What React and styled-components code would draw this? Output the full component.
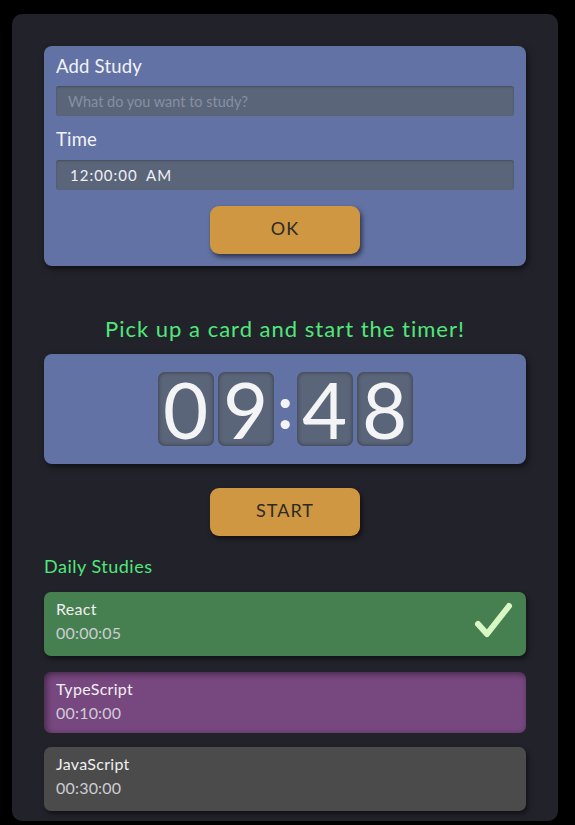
import React from 'react';
import styled, { createGlobalStyle } from 'styled-components';

const GlobalStyle = createGlobalStyle`
  body {
    margin: 0;
    background: #000;
    font-family: 'Lato', 'Noto Sans', sans-serif;
  }
`;

const Page = styled.div`
  padding: 14px 17px 0 12px;
`;

const Container = styled.main`
  background: #22222b;
  border-radius: 10px;
  padding: 32px 32px 10px;
  display: flex;
  flex-direction: column;
`;

const Card = styled.section`
  background: #6272a4;
  border-radius: 8px;
  box-shadow: 2px 3px 6px rgba(0, 0, 0, 0.55);
  padding: ${props => props.$padding || '8px 12px 12px'};
  display: flex;
  flex-direction: column;
`;

const Label = styled.label`
  color: #f2f2f8;
  font-size: 18.5px;
  line-height: 24px;
  letter-spacing: 0.2px;
  margin: ${props => props.$margin || '0'};
`;

const Input = styled.input`
  height: 30px;
  box-sizing: border-box;
  border: none;
  border-radius: 3px;
  background: #5b6579;
  box-shadow: inset 0 1px 2px rgba(0, 0, 0, 0.25);
  color: #eef0f6;
  font-family: inherit;
  font-size: 14.5px;
  padding: 0 12px;
  margin-top: 8px;
  outline: none;

  &::placeholder {
    color: #8690a3;
  }
`;

const TimeField = styled.div`
  height: 30px;
  box-sizing: border-box;
  border-radius: 3px;
  background: #5b6579;
  box-shadow: inset 0 1px 2px rgba(0, 0, 0, 0.25);
  color: #eef0f6;
  font-size: 15px;
  padding: 0 14px;
  margin-top: 9px;
  display: flex;
  align-items: center;
  letter-spacing: 1px;
  word-spacing: 4px;
`;

const Button = styled.button`
  align-self: center;
  width: 150px;
  height: 48px;
  border: none;
  border-radius: 9px;
  background: #cf9741;
  color: #2c2a28;
  font-family: inherit;
  font-size: 18px;
  letter-spacing: 1px;
  padding: 0 0 5px;
  box-shadow: 2px 3px 5px rgba(0, 0, 0, 0.55);
  cursor: pointer;
  margin-top: ${props => props.$top || '0'};
`;

const Heading = styled.h2`
  margin: ${props => props.$margin};
  color: #50e87a;
  font-weight: 400;
  font-size: ${props => props.$size};
  letter-spacing: ${props => props.$spacing || '0'};
  text-align: ${props => props.$align || 'left'};
  line-height: 1.2;
`;

const Clock = styled.div`
  display: flex;
  justify-content: center;
  align-items: center;
  gap: 4px;
`;

const Digit = styled.span`
  width: 56px;
  height: 74px;
  border-radius: 7px;
  background: #5b6579;
  box-shadow: inset 0 0 4px rgba(0, 0, 0, 0.45);
  color: #f4f4f6;
  font-size: 78px;
  line-height: 74px;
  text-align: center;
`;

const Colon = styled.span`
  width: 15px;
  color: #f4f4f6;
  font-size: 60px;
  line-height: 74px;
  text-align: center;
  margin: -6px 0 0;
  font-weight: 700;
`;

const StudyList = styled.ul`
  list-style: none;
  margin: 0;
  padding: 0;
  display: flex;
  flex-direction: column;
  gap: 14px;
`;

const colors = {
  done: '#468050',
  active: '#77477f',
  idle: '#4b4b4b',
};

const StudyCard = styled.li`
  position: relative;
  height: ${props => (props.$status === 'active' ? '61px' : '64px')};
  margin-top: ${props => (props.$status === 'active' ? '2px' : '0')};
  box-sizing: border-box;
  border-radius: 7px;
  padding: 7px 12px;
  background: ${props => colors[props.$status]};
  box-shadow: ${props =>
    props.$status === 'active'
      ? 'inset 2px 2px 6px rgba(0, 0, 0, 0.45)'
      : '2px 3px 5px rgba(0, 0, 0, 0.5)'};
  display: flex;
  flex-direction: column;
  gap: 4px;
`;

const StudyName = styled.span`
  color: #f0f0f0;
  font-size: 16px;
  letter-spacing: 0.3px;
  line-height: 20px;
`;

const StudyTime = styled.span`
  color: #cdcdd3;
  font-size: 16px;
  letter-spacing: 0.2px;
  line-height: 20px;
`;

const Check = styled.svg`
  position: absolute;
  right: 12px;
  top: 10px;
`;

const studies = [
  { name: 'React', time: '00:00:05', status: 'done' },
  { name: 'TypeScript', time: '00:10:00', status: 'active' },
  { name: 'JavaScript', time: '00:30:00', status: 'idle' },
];

export default function App() {
  return (
    <>
      <GlobalStyle />
      <Page>
        <Container>
          <Card>
            <Label>Add Study</Label>
            <Input placeholder="What do you want to study?" />
            <Label $margin="11px 0 0">Time</Label>
            <TimeField>12:00:00 AM</TimeField>
            <Button $top="16px">OK</Button>
          </Card>

          <Heading $size="22px" $spacing="1px" $align="center" $margin="50px 0 12px">
            Pick up a card and start the timer!
          </Heading>

          <Card $padding="18px 12px">
            <Clock>
              <Digit>0</Digit>
              <Digit>9</Digit>
              <Colon>:</Colon>
              <Digit>4</Digit>
              <Digit>8</Digit>
            </Clock>
          </Card>

          <Button $top="24px">START</Button>

          <Heading $size="18px" $spacing="0.5px" $margin="20px 0 14px">Daily Studies</Heading>

          <StudyList>
            {studies.map(s => (
              <StudyCard key={s.name} $status={s.status}>
                <StudyName>{s.name}</StudyName>
                <StudyTime>{s.time}</StudyTime>
                {s.status === 'done' && (
                  <Check width="42" height="38" viewBox="0 0 42 38">
                    <path
                      d="M6 22 L15 32 L37 4"
                      fill="none"
                      stroke="#d9f7c4"
                      strokeWidth="6"
                      strokeLinecap="round"
                      strokeLinejoin="round"
                    />
                  </Check>
                )}
              </StudyCard>
            ))}
          </StudyList>
        </Container>
      </Page>
    </>
  );
}
